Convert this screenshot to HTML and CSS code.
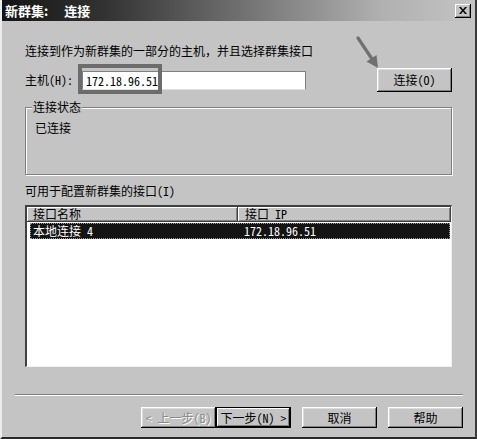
FILE: index.html
```html
<!DOCTYPE html>
<html lang="zh-CN">
<head>
<meta charset="utf-8">
<title>新群集: 连接</title>
<link rel="stylesheet" href="styles.css">
</head>
<body>
<div class="window">
  <div class="titlebar">
    <span class="title"><span class="title-main">新群集:</span><span class="title-sub">连接</span></span>
    <span class="close-btn">
      <svg width="8" height="7" viewBox="0 0 8 7"><path d="M0 0h2l2 2.5L6 0h2L5 3.5 8 7H6L4 4.5 2 7H0l3-3.5z" fill="#000"/></svg>
    </span>
  </div>
  <div class="content">
    <p class="intro">连接到作为新群集的一部分的主机，并且选择群集接口</p>
    <div class="host-row">
      <span class="host-label">主机(H):</span>
      <div class="text-input">172.18.96.51</div>
      <button class="btn connect">连接(O)</button>
      <div class="highlight"></div>
      <svg class="arrow" width="26" height="34" viewBox="0 0 26 34">
        <line x1="3" y1="2" x2="17" y2="23" stroke="#707070" stroke-width="3.2" stroke-linecap="round"/>
        <polygon points="23,32 21.5,19 11.5,25.5" fill="#707070"/>
      </svg>
    </div>
    <fieldset class="status">
      <legend>连接状态</legend>
      <div class="status-text">已连接</div>
    </fieldset>
    <div class="list-label">可用于配置新群集的接口(I)</div>
    <div class="listbox">
      <div class="list-head">
        <div class="head-cell col-name">接口名称</div>
        <div class="head-cell col-ip">接口 IP</div>
      </div>
      <div class="list-row selected">
        <span class="cell-name">本地连接 4</span>
        <span class="cell-ip">172.18.96.51</span>
      </div>
    </div>
  </div>
  <div class="separator"></div>
  <div class="button-row">
    <button class="btn wide disabled">&lt; 上一步(B)</button>
    <button class="btn wide default">下一步(N) &gt;</button>
    <button class="btn wide gap">取消</button>
    <button class="btn wide gap">帮助</button>
  </div>
</div>
</body>
</html>
```

FILE: styles.css
```css
* { box-sizing: border-box; }
html, body { margin: 0; padding: 0; }
body {
  width: 477px;
  height: 439px;
  overflow: hidden;
  background: #c4c4c4;
  font-family: "Noto Sans Mono CJK SC", "Noto Sans CJK SC", "Liberation Mono", monospace;
  font-size: 12px;
  line-height: 14px;
  color: #000;
}
.window {
  width: 477px;
  height: 439px;
  display: flex;
  flex-direction: column;
  background: #c4c4c4;
  border-left: 2px solid #ececec;
  border-right: 2px solid #3a3a3a;
  border-bottom: 2px solid #2a2a2a;
}
.titlebar {
  height: 21px;
  flex: none;
  display: flex;
  align-items: center;
  justify-content: space-between;
  padding: 0 4px 0 3px;
  background: linear-gradient(to right, #141414 0%, #333 22%, #7a7a7a 55%, #b0b0b0 80%, #c4c4c4 100%);
}
.title {
  color: #fff;
  font-family: "Noto Sans CJK SC", sans-serif;
  font-weight: bold;
  font-size: 13px;
  line-height: 16px;
  display: flex;
}
.title-sub {
  margin-left: 16px;
}
.close-btn {
  width: 16px;
  height: 14px;
  display: flex;
  align-items: center;
  justify-content: center;
  background: #c4c4c4;
  box-shadow: inset -1px -1px #000, inset 1px 1px #fff, inset -2px -2px #808080;
}
.content {
  padding: 0 23px;
  display: flex;
  flex-direction: column;
}
.intro {
  margin: 23px 0 0;
  height: 14px;
}
.host-row {
  position: relative;
  margin-top: 10px;
  height: 24px;
  display: flex;
  align-items: center;
}
.host-label {
  width: 57px;
}
.text-input {
  width: 224px;
  height: 19px;
  background: #fff;
  padding: 2px 3px 0;
  border-top: 1px solid #808080;
  border-left: 1px solid #808080;
  border-right: 1px solid #808080;
  border-bottom: 1px solid #e0e0e0;
}
.highlight {
  position: absolute;
  left: 53px;
  top: -4px;
  width: 84px;
  height: 30px;
  border: 4px solid #6c6c6c;
}
.arrow {
  position: absolute;
  left: 330px;
  top: -32px;
}
.btn {
  font: inherit;
  color: #000;
  background: #c4c4c4;
  border: none;
  padding: 0;
  margin: 0;
  box-shadow: inset -1px -1px #000, inset 1px 1px #fff, inset -2px -2px #808080, inset 2px 2px #dcdcdc;
}
.connect {
  margin-left: auto;
  width: 75px;
  height: 24px;
}
.status {
  margin: 8px 0 0;
  padding: 7px 9px 39px;
  border: 1px solid #808080;
  box-shadow: inset 1px 1px #fff, 1px 1px #fff;
  min-width: 0;
}
.status legend {
  padding: 0 1px;
  margin-left: -3px;
  line-height: 14px;
  background: #c4c4c4;
}
.status-text {
  height: 14px;
}
.list-label {
  margin-top: 9px;
  height: 14px;
}
.listbox {
  margin-top: 7px;
  height: 162px;
  background: #fff;
  border-top: 2px solid #404040;
  border-left: 2px solid #404040;
  border-right: 1px solid #f0f0f0;
  border-bottom: 1px solid #f0f0f0;
}
.list-head {
  display: flex;
  height: 15px;
}
.head-cell {
  background: #c4c4c4;
  line-height: 14px;
  padding-left: 6px;
  box-shadow: inset -1px -1px #404040, inset 1px 1px #fff, inset -2px -2px #808080;
}
.col-name { width: 211px; }
.col-ip { flex: 1; padding-left: 7px; }
.list-row {
  display: flex;
  margin: 1px 1px 0 3px;
  height: 16px;
  line-height: 14px;
}
.list-row.selected {
  background: #141414;
  color: #fff;
  outline: 1px dotted #9a9a9a;
  outline-offset: -1px;
}
.cell-name {
  width: 214px;
  padding-left: 3px;
  padding-top: 1px;
}
.cell-ip {
  padding-top: 1px;
}
.separator {
  margin: 27px 0 0 13px;
  width: 448px;
  height: 2px;
  border-top: 1px solid #808080;
  border-bottom: 1px solid #fff;
}
.button-row {
  margin-top: 11px;
  display: flex;
  justify-content: flex-end;
  padding-right: 12px;
}
.wide {
  width: 75px;
  height: 21px;
}
.gap { margin-left: 11px; }
.disabled {
  color: #8a8a8a;
  text-shadow: 1px 1px #fff;
}
.default {
  box-shadow: inset 0 0 0 1px #000, inset -2px -2px #000, inset 2px 2px #fff, inset -3px -3px #808080;
}
```
